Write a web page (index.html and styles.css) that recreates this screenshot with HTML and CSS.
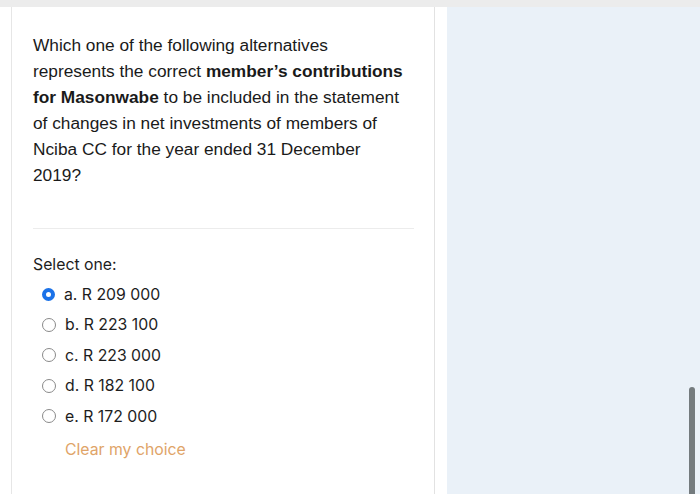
FILE: index.html
```html
<!DOCTYPE html>
<html>
<head>
<meta charset="utf-8">
<link rel="stylesheet" href="styles.css">
</head>
<body>
<div class="topbar"></div>
<div class="layout">
  <div class="gutter"></div>
  <main class="card">
    <p class="question">Which one of the following alternatives represents the correct <b>member’s contributions</b> <b>for Masonwabe</b> to be included in the statement of changes in net investments of members of Nciba CC for the year ended 31 December 2019?</p>
    <hr class="divider">
    <div class="prompt">Select one:</div>
    <ul class="options">
      <li class="option"><span class="radio checked"></span><span>a. R 209 000</span></li>
      <li class="option"><span class="radio"></span><span>b. R 223 100</span></li>
      <li class="option"><span class="radio"></span><span>c. R 223 000</span></li>
      <li class="option"><span class="radio"></span><span>d. R 182 100</span></li>
      <li class="option"><span class="radio"></span><span>e. R 172 000</span></li>
    </ul>
    <a class="clear">Clear my choice</a>
  </main>
  <div class="spacer"></div>
  <aside class="side">
    <div class="thumb"></div>
  </aside>
</div>
</body>
</html>
```
FILE: styles.css
```css
html, body {
  margin: 0;
  padding: 0;
  height: 100%;
  overflow: hidden;
  background: #fff;
}
.topbar {
  height: 7px;
  background: #ececec;
}
.layout {
  display: flex;
  height: 487px;
}
.gutter {
  width: 11px;
  border-right: 1px solid #e6e6e6;
}
.card {
  width: 401px;
  padding: 25px 0 0 21px;
  border-right: 1px solid #e2e2e2;
  font-family: "Liberation Sans", Arial, sans-serif;
  color: #1a1a1a;
}
.question {
  margin: 0;
  font-size: 17.3px;
  line-height: 26px;
  width: 375px;
}
.divider {
  border: 0;
  border-top: 1px solid #ececec;
  margin: 40px 0 0 0;
  width: 381px;
}
.prompt {
  font-family: "Inter", "Roboto", sans-serif;
  font-size: 15.8px;
  line-height: 20px;
  margin-top: 26px;
  color: #1d1d1d;
}
.options {
  list-style: none;
  margin: 4px 0 0 0;
  padding: 0 0 0 9px;
  font-family: "Inter", "Roboto", sans-serif;
  font-size: 15.8px;
  color: #1d1d1d;
}
.option {
  display: flex;
  align-items: center;
  height: 30.5px;
  gap: 9px;
}
.radio {
  width: 12px;
  height: 12px;
  border: 1.5px solid #8a8a8a;
  border-radius: 50%;
  box-sizing: content-box;
  flex: none;
}
.radio.checked {
  width: 5px;
  height: 5px;
  border: 4.5px solid #1b72e8;
}
.clear {
  display: block;
  margin: 8px 0 0 32px;
  font-family: "Inter", "Roboto", sans-serif;
  font-size: 15.8px;
  color: #e0a468;
}
.spacer {
  width: 12px;
}
.side {
  flex: 1;
  background: #eaf1f8;
  position: relative;
}
.thumb {
  position: absolute;
  left: 242px;
  top: 380px;
  bottom: 0;
  width: 6px;
  background: #747b7e;
  border-radius: 3px 3px 0 0;
}
```
